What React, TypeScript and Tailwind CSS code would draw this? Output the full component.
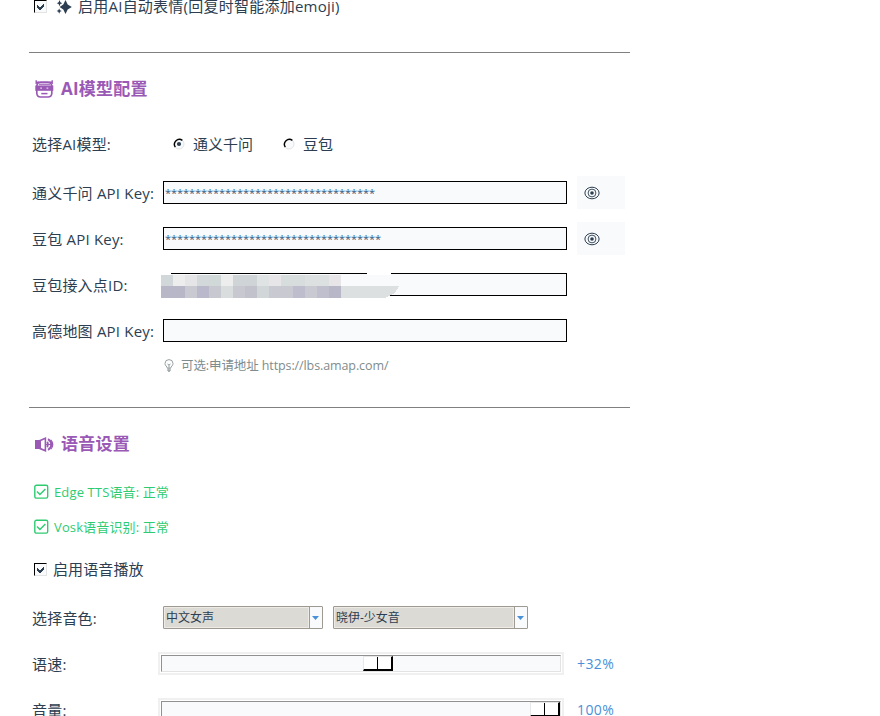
import { ReactNode } from "react";

function SparkleIcon() {
  return (
    <svg width="16" height="14" viewBox="0 0 16 14" fill="#2c3e50" className="shrink-0">
      <path d="M9.5 0 L11.7 4.6 L15.8 7 L11.7 9.4 L9.5 14 L7.3 9.4 L3.6 7 L7.3 4.6 Z" />
      <path d="M3.5 0 L4.4 2.3 L6.3 3.2 L4.4 4.1 L3.5 6.2 L2.6 4.1 L0.8 3.2 L2.6 2.3 Z" />
      <path d="M3.2 8.4 L4 10.2 L5.8 11 L4 11.8 L3.2 13.8 L2.3 11.8 L0.6 11 L2.3 10.2 Z" />
    </svg>
  );
}

function RobotIcon() {
  return (
    <svg width="19" height="18" viewBox="0 0 19 18" fill="none" stroke="#9b59b6" className="shrink-0">
      <path d="M1.2 0.3 V4 M17.2 0.3 V4 M1 2.2 H4 M14.5 2.2 H17.5" strokeWidth="1.4" />
      <path d="M1.8 6 Q2.5 2.2 5.5 2.2 H13 Q16 2.2 16.8 6 V13.5 Q16.5 17 13 17 H5.5 Q2.2 17 1.8 13.5 Z" strokeWidth="1.7" />
      <path d="M0.3 5.5 H18.3 V10.8 H0.3 Z" fill="#9b59b6" stroke="none" />
      <path d="M5.2 8.2 H7 M11.5 8.2 H13.3" stroke="#e3cdec" strokeWidth="1.2" />
      <path d="M4 4.4 H15" strokeWidth="1.8" opacity="0.8" />
      <path d="M6.3 13.6 H12.5" strokeWidth="1.5" />
    </svg>
  );
}

function SpeakerIcon() {
  return (
    <svg width="19" height="15" viewBox="0 0 19 15" fill="none" stroke="#9b59b6" className="shrink-0">
      <path d="M0 3 H5 V12 H0 Z" fill="#9b59b6" stroke="none" />
      <path d="M5.2 3.4 L10.4 1.3 V13.7 L5.2 11.6 Z" strokeWidth="1.6" />
      <path d="M12.3 4.8 Q13.8 7.5 12.3 10.2" strokeWidth="1.9" />
      <path d="M13 2.2 Q16.3 4 16.3 7.5 Q16.3 11 13 12.8" strokeWidth="1.9" />
      <path d="M15.8 2.8 Q17.8 5 17.8 7.5 Q17.8 10 15.8 12.2 M11 7.5 H18" strokeWidth="1.2" />
    </svg>
  );
}

function EyeIcon() {
  return (
    <svg width="16" height="14" viewBox="0 0 16 14" fill="none" stroke="#2c3e50" className="shrink-0">
      <ellipse cx="8" cy="7" rx="7.1" ry="5.8" strokeWidth="1" />
      <circle cx="8" cy="7" r="3.9" strokeWidth="0.9" />
      <circle cx="8" cy="7" r="1.8" fill="#2c3e50" stroke="none" />
    </svg>
  );
}

function BulbIcon() {
  return (
    <svg width="10" height="14" viewBox="0 0 10 14" fill="none" stroke="#8b9596" strokeWidth="0.9" className="shrink-0">
      <path d="M3.3 9.2 Q3.3 8 2 6.9 Q1 6 1 4.6 A4 4 0 0 1 9 4.6 Q9 6 8 6.9 Q6.7 8 6.7 9.2 Z" />
      <path d="M3.5 5 L5 6 L6.5 5 M5 6 V9 M3.3 10.2 H6.7 M3.3 11.4 H6.7 M4.2 12.5 H5.8" />
    </svg>
  );
}

function GreenCheckIcon() {
  return (
    <svg width="15" height="15" viewBox="0 0 15 15" fill="none" stroke="#2ecc71" className="shrink-0">
      <rect x="0.8" y="1.2" width="12.9" height="12.9" rx="1.6" strokeWidth="1.4" />
      <path d="M3 7.5 L5.9 10.4 L11.4 4.9" strokeWidth="1.4" />
    </svg>
  );
}

function Checkbox() {
  return (
    <span className="flex w-[13px] h-[13px] shrink-0 border border-t-black border-l-black border-r-[#e3e3e3] border-b-[#e3e3e3] bg-[#f8fafc]">
      <svg width="11" height="11" viewBox="-1 -1 11 11" shapeRendering="crispEdges">
        <path d="M1 3 V6 L3 8 H4 L8 4 V1 L3.5 5.5 Z" fill="#2c3e50" />
      </svg>
    </span>
  );
}

function Radio({ checked = false }: { checked?: boolean }) {
  return (
    <svg width="12" height="12" viewBox="0 0 12 12" fill="none" className="shrink-0">
      <circle cx="6" cy="6" r="5" fill="#f8fafc" stroke="#e3e3e3" />
      <path d="M2.3 9.2 A5 5 0 0 1 9.4 2.4" stroke="#000" strokeWidth="1.4" />
      {checked && <circle cx="6" cy="6" r="2.1" fill="#2c3e50" />}
    </svg>
  );
}

function Heading({ icon, children }: { icon: ReactNode; children: ReactNode }) {
  return (
    <h2 className="flex items-center h-[24px] pl-[6px] text-[17px] tracking-[0.25px] font-bold text-[#9b59b6] whitespace-nowrap">
      <span className="w-[26px] flex items-center">{icon}</span>
      {children}
    </h2>
  );
}

function Row({ label, children }: { label: string; children?: ReactNode }) {
  return (
    <div className="flex items-center h-[46px]">
      <span className="w-[134px] pl-[3px] shrink-0 tracking-[0.2px] whitespace-nowrap">{label}</span>
      {children}
    </div>
  );
}

function Field({ value = "", reveal = false }: { value?: string; reveal?: boolean }) {
  return (
    <>
      <div className="w-[404px] h-[23px] -mt-px shrink-0 border border-black bg-[#f8fafc] px-[1px] pt-px overflow-hidden text-[11px] leading-[20px] tracking-[-0.06px] text-[#34597c]">
        {value}
      </div>
      {reveal && (
        <button className="ml-[10px] w-[48px] h-[33px] -mt-px pl-[7px] pt-px flex items-center bg-[#f8fafc]">
          <EyeIcon />
        </button>
      )}
    </>
  );
}

const mosaic = [
  ["#d2d8da", "#ededee", "#e5e4e6", "#d3d9da", "#d1d8d8", "#ededee", "#cfd5d7", "#cfd5d7", "#dfe3e3", "#e8e5e8", "#d7dcdc", "#d7dcdc", "#dce0e0", "#dce0e0", "#e8e5e8"],
  ["#b7b7c8", "#b7b7c8", "#c9c9d1", "#b9b9cb", "#c8c8d1", "#dadddd", "#c8c8d1", "#c2c2cc", "#d1d6d8", "#c9c9d1", "#c9c9d1", "#bdbdcd", "#c9c9d1", "#bfbfcd", "#b7b7c8"],
];

function Redaction() {
  return (
    <div className="absolute -left-[2px] top-[11px] w-[240px] h-[25px]">
      <svg width="240" height="25" viewBox="0 0 240 25" shapeRendering="crispEdges">
        <path d="M0 0 H10 V2 H206 V0 H230 V3 H180 V25 H0 Z" fill="#fff" />
        <rect x="10" y="1" width="196" height="1" fill="#fafbfc" />
        <rect x="180" y="2" width="50" height="11" fill="#f8fafc" />
        <path d="M180 13 H238 L234 20 L224 25 H180 Z" fill="#dce0e1" />
        {mosaic.map((colors, r) =>
          colors.map((c, i) => (
            <rect key={`${r}-${i}`} x={i * 12} y={r === 0 ? 2 : 13} width="12" height={r === 0 ? 11 : 12} fill={c} />
          ))
        )}
      </svg>
    </div>
  );
}

function Select({ value, className }: { value: string; className: string }) {
  return (
    <div className={`flex h-[23px] -mt-px shrink-0 border border-[#9e9a91] rounded-[1px] bg-[#f8fafc] ${className}`}>
      <div className="flex-1 bg-[#dcdad5] border border-[#eeebe7] pl-px flex items-center text-[12px] whitespace-nowrap">{value}</div>
      <div className="w-[13px] pr-px border-l border-[#9e9a91] flex items-center justify-center">
        <svg width="7" height="4" viewBox="0 0 7 4">
          <path d="M0 0 H7 L3.5 4 Z" fill="#4a90d9" />
        </svg>
      </div>
    </div>
  );
}

function Slider({ offset, value }: { offset: number; value: string }) {
  return (
    <>
      <div className="-ml-[5px] w-[406px] h-[23px] -mt-px shrink-0 border-2 border-[#f0f0f0] p-px">
        <div className="h-[17px] border border-t-[#919191] border-l-[#919191] border-r-[#e3e3e3] border-b-[#e3e3e3] bg-[#f8fafc]">
          <div
            className="w-[30px] h-[15px] flex bg-white border-t border-l border-t-[#e8e8e8] border-l-[#e8e8e8] border-r-2 border-b-2 border-r-black border-b-black"
            style={{ marginLeft: offset }}
          >
            <div className="w-[14px] border-r border-black" />
          </div>
        </div>
      </div>
      <span className="ml-[13px] text-[14px] tracking-[0.4px] text-[#4a90d9]">{value}</span>
    </>
  );
}

function Status({ children }: { children: ReactNode }) {
  return (
    <div className="flex items-center h-[35px] pl-[5px] gap-[5px] text-[13px] tracking-[0.13px] text-[#2ecc71] whitespace-nowrap">
      <GreenCheckIcon />
      <span>{children}</span>
    </div>
  );
}

export default function App() {
  return (
    <div className="w-[880px] h-[716px] overflow-hidden bg-white pl-[29px] text-[15px] leading-[20px] text-[#2c3e50] font-['Open_Sans','Noto_Sans_CJK_SC',sans-serif]">
      <div className="flex items-center h-[13px] pl-[5px] whitespace-nowrap">
        <Checkbox />
        <span className="ml-[9px] mr-[6px] flex">
          <SparkleIcon />
        </span>
        <span className="-mt-[2px] tracking-[0.24px]">启用AI自动表情(回复时智能添加emoji)</span>
      </div>

      <section className="mt-[39px] w-[601px] border-t border-[#808080] pt-[24px]">
        <Heading icon={<RobotIcon />}>AI模型配置</Heading>
        <div className="mt-[20px] mb-[3px]">
          <Row label="选择AI模型:">
            <div className="flex items-center pl-[10px] whitespace-nowrap">
              <Radio checked />
              <span className="ml-[8px] w-[90px]">通义千问</span>
              <Radio />
              <span className="ml-[8px]">豆包</span>
            </div>
          </Row>
        </div>
        <Row label="通义千问 API Key:">
          <Field value={"*".repeat(35)} reveal />
        </Row>
        <Row label="豆包 API Key:">
          <Field value={"*".repeat(36)} reveal />
        </Row>
        <Row label="豆包接入点ID:">
          <div className="relative h-[46px] flex items-center">
            <Field />
            <Redaction />
          </div>
        </Row>
        <Row label="高德地图 API Key:">
          <Field />
        </Row>
        <div className="flex items-center h-[23px] pl-[135px] gap-[7px] text-[12.5px] tracking-[-0.1px] text-[#7f8c8d] whitespace-nowrap">
          <BulbIcon />
          <span>可选:申请地址 https://lbs.amap.com/</span>
        </div>
      </section>

      <section className="mt-[30px] w-[601px] border-t border-[#808080] pt-[24px]">
        <Heading icon={<SpeakerIcon />}>语音设置</Heading>
        <div className="mt-[18px]">
          <Status>Edge TTS语音: 正常</Status>
          <Status>Vosk语音识别: 正常</Status>
        </div>
        <div className="flex items-center h-[50px] mb-px pl-[5px] gap-[6px]">
          <Checkbox />
          <span className="tracking-[0.1px]">启用语音播放</span>
        </div>
        <Row label="选择音色:">
          <Select value="中文女声" className="w-[160px]" />
          <Select value="晓伊-少女音" className="w-[195px] ml-[10px]" />
        </Row>
        <Row label="语速:">
          <Slider offset={201} value="+32%" />
        </Row>
        <Row label="音量:">
          <Slider offset={368} value="100%" />
        </Row>
      </section>
    </div>
  );
}
